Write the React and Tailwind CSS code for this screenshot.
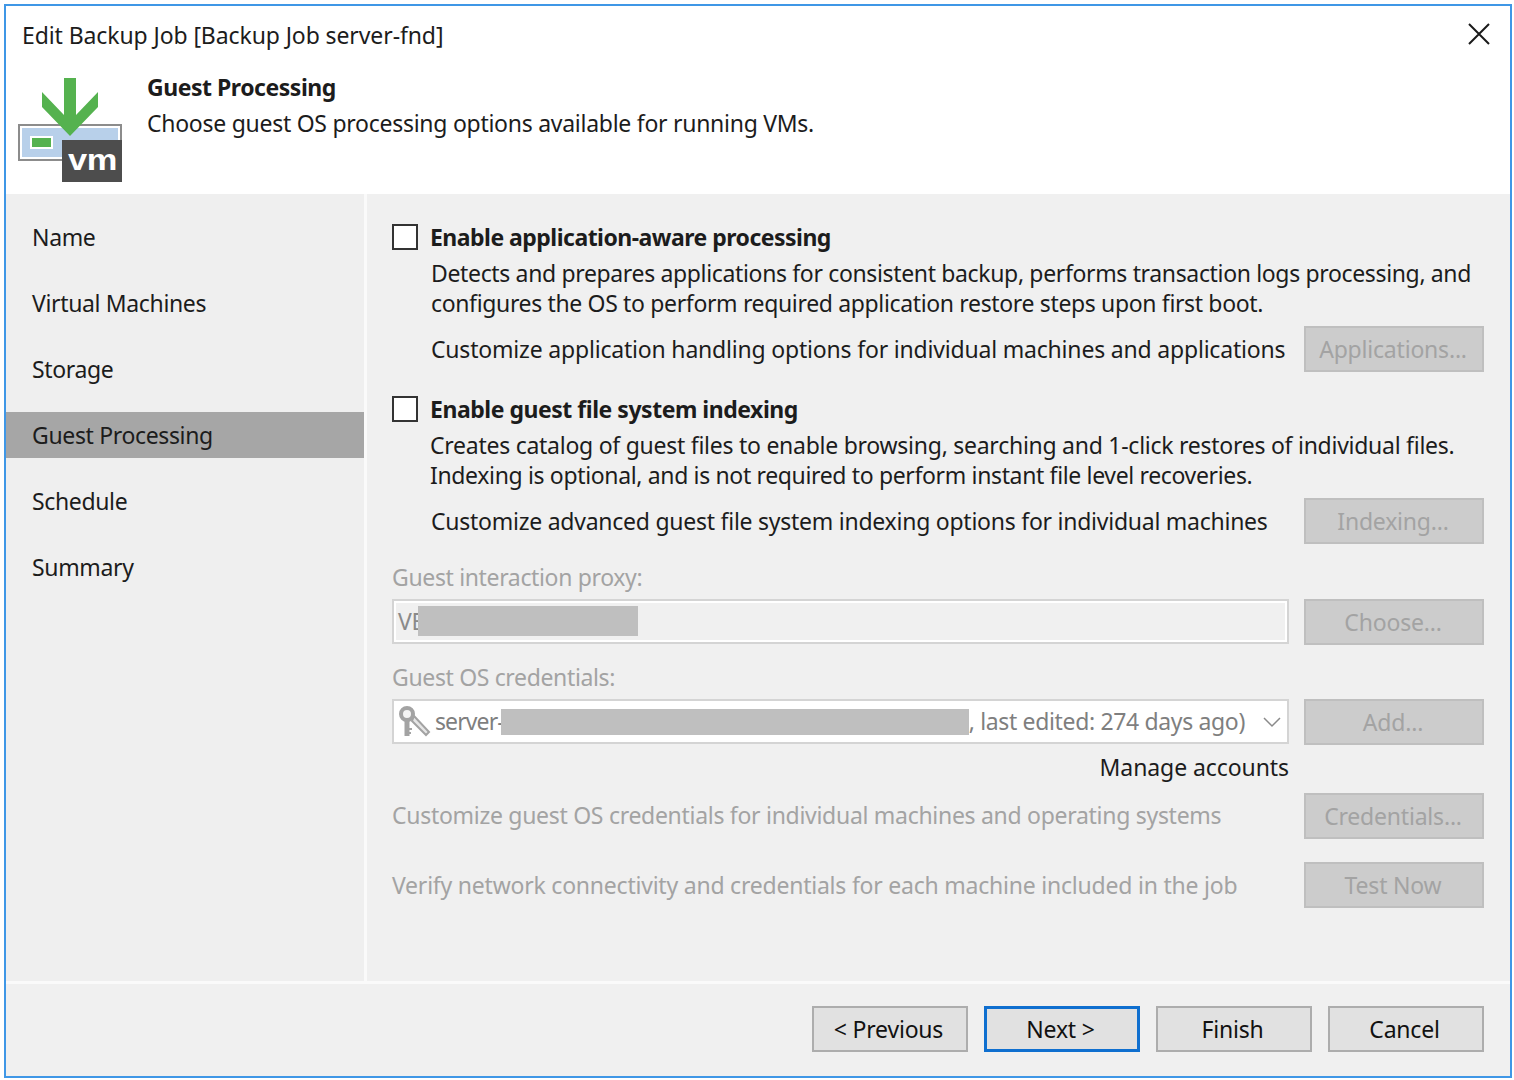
import { useState } from "react";

const steps = ["Name", "Virtual Machines", "Storage", "Guest Processing", "Schedule", "Summary"];

function JobIcon() {
  return (
    <svg width="106" height="106" viewBox="0 0 106 106" className="shrink-0">
      <rect x="1" y="47" width="102" height="35" fill="#ffffff" stroke="#8c8c8c" strokeWidth="2" />
      <rect x="4" y="50" width="96" height="29" fill="#b8d0ea" />
      <rect x="12" y="58" width="23" height="13" fill="#ffffff" />
      <rect x="14" y="60" width="19" height="9" fill="#55b24f" />
      <path d="M46 0H58V37L80 14V29L52 58L24 29V14L46 37Z" fill="#55b24f" />
      <rect x="44" y="62" width="60" height="42" fill="#4d4d4d" />
      <text x="50" y="92" textLength="49" lengthAdjust="spacingAndGlyphs" fill="#ffffff" fontFamily="'Liberation Sans', sans-serif" fontWeight="700" fontSize="30">vm</text>
    </svg>
  );
}

function KeyIcon() {
  return (
    <svg width="34" height="34" viewBox="0 0 34 34" className="shrink-0">
      <path d="M16 11L31 27L28 30L14 16Z" fill="#e6e6e6" stroke="#a3a3a3" strokeWidth="2" />
      <circle cx="9" cy="9" r="6" fill="#f4f4f4" stroke="#a3a3a3" strokeWidth="4" />
      <path d="M9 15V31" stroke="#a3a3a3" strokeWidth="5" />
      <path d="M11 24H14M11 28H13" stroke="#a3a3a3" strokeWidth="2" />
    </svg>
  );
}

function Check({ checked, onChange }) {
  return (
    <button
      type="button"
      onClick={onChange}
      className="w-[26px] h-[26px] shrink-0 border-2 border-[#333333] bg-white flex items-center justify-center"
    >
      {checked ? <span className="w-3 h-3 bg-[#333333]" /> : null}
    </button>
  );
}

function SideButton({ children }) {
  return (
    <div className="w-[180px] h-[46px] shrink-0 border-2 border-[#bfbfbf] bg-[#cccccc] text-[#a3a3a3] tracking-[-0.2px] pr-[2px] pb-[1px] flex items-center justify-center">
      {children}
    </div>
  );
}

function FootButton({ children, focused }) {
  return (
    <button
      type="button"
      className={`w-[156px] h-[46px] bg-[#e1e1e1] text-[#111111] tracking-[-0.2px] pr-[3px] flex items-center justify-center ${focused ? "border-[3px] border-[#0f6fcf]" : "border-2 border-[#adadad]"}`}
    >
      {children}
    </button>
  );
}

export default function App() {
  const [appAware, setAppAware] = useState(false);
  const [indexing, setIndexing] = useState(false);

  return (
    <div className="w-[1514px] h-[1080px] bg-white pl-[4px] pt-[4px] overflow-hidden font-['Noto_Sans',sans-serif] text-[23px] leading-[30px] tracking-[-0.35px] text-[#1c1c1c]">
      <div className="w-[1508px] h-[1074px] border-2 border-[#3f97e6] bg-white flex flex-col">
        <div className="h-[188px] shrink-0 bg-white flex flex-col">
          <div className="flex justify-between pl-[16px] pr-[20px] pt-[14px]">
            <span className="tracking-[-0.1px]">Edit Backup Job [Backup Job server-fnd]</span>
            <svg width="22" height="22" viewBox="0 0 22 22" className="mt-[3px]">
              <path d="M1 1L21 21M21 1L1 21" stroke="#1a1a1a" strokeWidth="2" />
            </svg>
          </div>
          <div className="flex pl-[12px] pt-[28px]">
            <JobIcon />
            <div className="pl-[23px] -mt-[6px]">
              <div className="font-bold tracking-[-0.47px]">Guest Processing</div>
              <div className="mt-[6px] tracking-[-0.27px]">Choose guest OS processing options available for running VMs.</div>
            </div>
          </div>
        </div>

        <div className="flex-1 flex min-h-0 bg-[#f0f0f0]">
          <div className="w-[358px] shrink-0 bg-[#efefef] pt-[20px]">
            {steps.map((step, i) => (
              <div
                key={step}
                className={`h-[46px] mb-[20px] pl-[26px] flex items-center ${i === 3 ? "bg-[#a6a6a6]" : ""}`}
              >
                {step}
              </div>
            ))}
          </div>
          <div className="w-[3px] shrink-0 bg-[#fafafa]" />
          <div className="flex-1 pl-[25px] pr-[26px] pt-[28px]">
            <div className="flex items-center gap-[12px] h-[30px] font-bold tracking-[-0.52px]">
              <Check checked={appAware} onChange={() => setAppAware(!appAware)} />
              <span>Enable application-aware processing</span>
            </div>
            <div className="pl-[39px] mt-[6px]">
              <div>Detects and prepares applications for consistent backup, performs transaction logs processing, and</div>
              <div>configures the OS to perform required application restore steps upon first boot.</div>
            </div>
            <div className="flex items-center justify-between pl-[39px] mt-[8px]">
              <span className="tracking-[-0.19px]">Customize application handling options for individual machines and applications</span>
              <SideButton>Applications...</SideButton>
            </div>

            <div className="flex items-center gap-[12px] h-[30px] font-bold tracking-[-0.47px] mt-[22px]">
              <Check checked={indexing} onChange={() => setIndexing(!indexing)} />
              <span>Enable guest file system indexing</span>
            </div>
            <div className="pl-[38px] mt-[6px]">
              <div className="tracking-[-0.26px]">Creates catalog of guest files to enable browsing, searching and 1-click restores of individual files.</div>
              <div>Indexing is optional, and is not required to perform instant file level recoveries.</div>
            </div>
            <div className="flex items-center justify-between pl-[39px] mt-[8px]">
              <span className="tracking-[-0.25px]">Customize advanced guest file system indexing options for individual machines</span>
              <SideButton>Indexing...</SideButton>
            </div>

            <div className="mt-[18px] text-[#a3a3a3]">Guest interaction proxy:</div>
            <div className="flex justify-between mt-[7px]">
              <div className="w-[897px] h-[45px] border-2 border-[#d4d4d4] bg-white p-[2px]">
                <div className="h-full bg-[#f0f0f0] flex items-center pl-[2px] pb-[2px] text-[#8a8a8a]">
                  <span>VE</span>
                  <span className="w-[220px] h-[30px] -ml-[6px] bg-[#bfbfbf]" />
                </div>
              </div>
              <SideButton>Choose...</SideButton>
            </div>

            <div className="mt-[17px] text-[#a3a3a3]">Guest OS credentials:</div>
            <div className="flex justify-between mt-[7px]">
              <div className="w-[897px] h-[45px] border-2 border-[#d4d4d4] bg-white flex items-center pl-[4px] pr-[6px] text-[#7f7f7f]">
                <KeyIcon />
                <span className="ml-[3px] pb-[2px] tracking-[-0.9px]">server-</span>
                <span className="w-[468px] h-[26px] -ml-[3px] bg-[#bfbfbf]" />
                <span className="flex-1 whitespace-nowrap overflow-hidden pb-[2px]">, last edited: 274 days ago)</span>
                <svg width="18" height="12" viewBox="0 0 18 12" className="ml-[12px] shrink-0">
                  <path d="M1 2L9 10L17 2" fill="none" stroke="#8a8a8a" strokeWidth="1.5" />
                </svg>
              </div>
              <SideButton>Add...</SideButton>
            </div>

            <div className="w-[897px] mt-[7px] text-right tracking-[-0.08px]">Manage accounts</div>

            <div className="flex items-center justify-between mt-[11px] text-[#a3a3a3]">
              <span className="tracking-[-0.29px] pb-[2px]">Customize guest OS credentials for individual machines and operating systems</span>
              <SideButton>Credentials...</SideButton>
            </div>
            <div className="flex items-center justify-between mt-[23px] text-[#a3a3a3]">
              <span className="tracking-[-0.22px]">Verify network connectivity and credentials for each machine included in the job</span>
              <SideButton>Test Now</SideButton>
            </div>
          </div>
        </div>

        <div className="h-[3px] shrink-0 bg-[#fafafa]" />
        <div className="h-[92px] shrink-0 bg-[#f0f0f0] flex justify-end gap-[16px] pr-[26px] pt-[22px]">
          <FootButton>&lt; Previous</FootButton>
          <FootButton focused>Next &gt;</FootButton>
          <FootButton>Finish</FootButton>
          <FootButton>Cancel</FootButton>
        </div>
      </div>
    </div>
  );
}
